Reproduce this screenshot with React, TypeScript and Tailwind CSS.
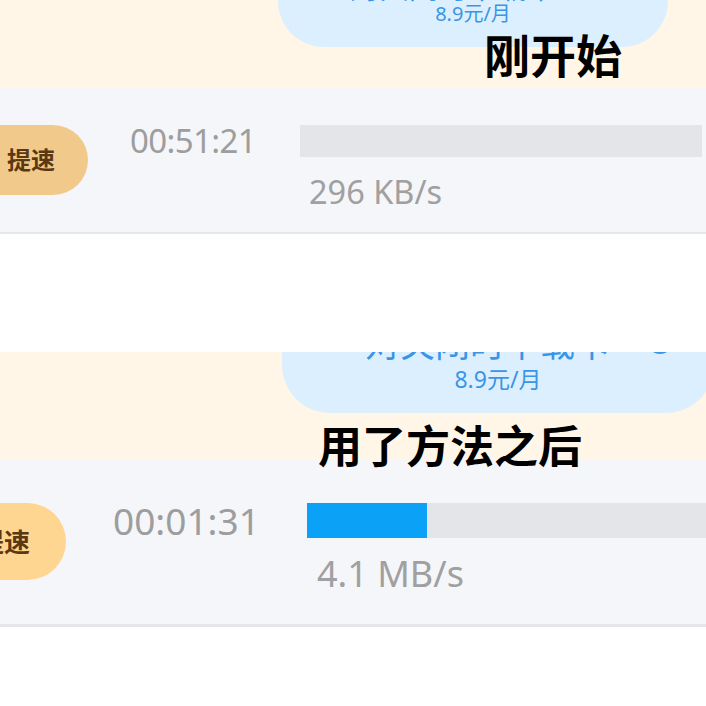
import React from "react";

const ff = "font-['Noto_Sans','Noto_Sans_CJK_SC',sans-serif]";

function Ring({ size }: { size: number }) {
  return (
    <svg width={size} height={size} viewBox="0 0 30 30" className="shrink-0">
      <circle cx="15" cy="15" r="12.5" fill="none" stroke="#3a95e6" strokeWidth="3" />
    </svg>
  );
}

export default function App() {
  return (
    <div className={`w-[706px] h-[706px] bg-white overflow-hidden flex flex-col ${ff}`}>
      {/* Section 1 */}
      <div className="relative flex flex-col">
        <div className="h-[88px] bg-[#fff6e7] overflow-hidden flex">
          <div className="ml-[278px] w-[390px] h-[47px] shrink-0 rounded-b-[46px] bg-[#dcefff] overflow-hidden flex flex-col items-center justify-end pb-[23px]">
            <div className="ml-[16px] flex items-end gap-[30px] mb-[3px] text-[#3a95e6] text-[29.5px] leading-none whitespace-nowrap">
              <span>对关闭时下载卡</span>
              <span className="mb-[5px] flex">
                <Ring size={26} />
              </span>
            </div>
            <div className="text-[#3a95e6] text-[20px] leading-none whitespace-nowrap">8.9元/月</div>
          </div>
        </div>
        <div className="h-[146px] bg-[#f5f6fa] border-b-2 border-[#e6e7ea] flex items-start overflow-hidden">
          <div className="ml-[-60px] mt-[37px] w-[148px] h-[70px] shrink-0 rounded-full bg-[#f1ca8b] flex items-center justify-end pr-[33px]">
            <span className="text-[24px] leading-none text-[#5a3912] font-bold">提速</span>
          </div>
          <div className="ml-[42px] mt-[36px] w-[170px] shrink-0 text-[33px] leading-none tracking-[-0.6px] text-[#9d9d9d]">
            00:51:21
          </div>
          <div className="mt-[37px] w-[402px] shrink-0 flex flex-col">
            <div className="h-[32px] bg-[#e4e5e9]" />
            <div className="ml-[9px] mt-[19px] text-[32.5px] leading-none text-[#a0a0a0] whitespace-nowrap">
              296 KB/s
            </div>
          </div>
        </div>
        <div className="absolute left-[484px] top-[30px] text-[46px] leading-none font-bold text-black font-['Noto_Sans_CJK_SC',sans-serif] whitespace-nowrap">
          刚开始
        </div>
      </div>

      {/* Section 2 */}
      <div className="relative flex flex-col mt-[118px]">
        <div className="h-[108px] bg-[#fff6e7] overflow-hidden flex">
          <div className="ml-[282px] w-[432px] h-[61px] shrink-0 rounded-b-[48px] bg-[#dcefff] overflow-hidden flex flex-col items-center justify-end pb-[22px]">
            <div className="ml-[44px] flex items-end gap-[35px] mb-[7px] text-[#3a95e6] text-[35px] leading-none whitespace-nowrap">
              <span>对关闭时下载卡</span>
              <span className="mb-[6px] flex">
                <Ring size={30} />
              </span>
            </div>
            <div className="text-[#3a95e6] text-[23px] leading-none whitespace-nowrap">8.9元/月</div>
          </div>
        </div>
        <div className="h-[167px] bg-[#f5f6fa] border-b-[3px] border-[#e5e6e9] flex items-start overflow-hidden">
          <div className="ml-[-80px] mt-[43px] w-[146px] h-[77px] shrink-0 rounded-full bg-[#ffd592] flex items-center justify-end pr-[36px]">
            <span className="text-[26px] leading-none text-[#5a3912] font-bold">提速</span>
          </div>
          <div className="ml-[47px] mt-[42px] w-[194px] shrink-0 text-[37px] leading-none text-[#9d9d9d]">
            00:01:31
          </div>
          <div className="mt-[43px] w-[420px] shrink-0 flex flex-col">
            <div className="h-[35px] bg-[#e4e5e9] flex">
              <div className="w-[120px] h-full bg-[#0aa1f6]" />
            </div>
            <div className="ml-[10px] mt-[18px] text-[36px] leading-none text-[#a0a0a0] whitespace-nowrap">
              4.1 MB/s
            </div>
          </div>
        </div>
        <div className="absolute left-[318px] top-[70px] text-[44px] leading-none font-bold text-black font-['Noto_Sans_CJK_SC',sans-serif] whitespace-nowrap">
          用了方法之后
        </div>
      </div>
    </div>
  );
}
